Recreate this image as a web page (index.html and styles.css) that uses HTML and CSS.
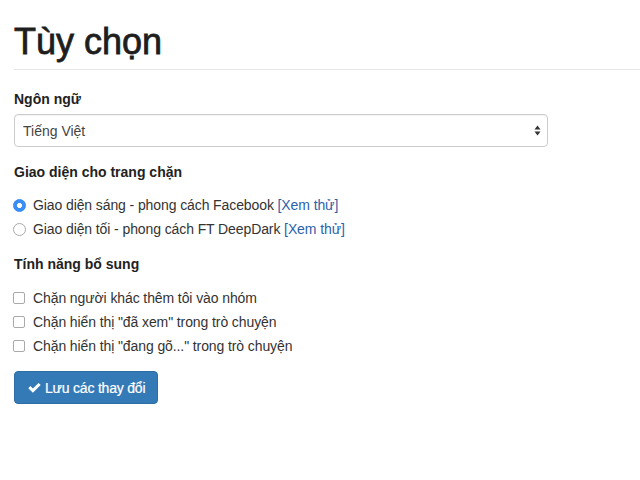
FILE: index.html
```html
<!DOCTYPE html>
<html lang="vi">
<head>
<meta charset="utf-8">
<title>Tùy chọn</title>
<link rel="stylesheet" href="styles.css">
</head>
<body>
<div class="page">
  <h1 class="title">Tùy chọn</h1>

  <div class="section section-lang">
    <label class="section-label" for="lang">Ngôn ngữ</label>
    <div class="select-wrap">
      <select id="lang" class="select">
        <option>Tiếng Việt</option>
      </select>
      <svg class="select-arrows" width="7" height="11" viewBox="0 0 7 11" aria-hidden="true">
        <path d="M3.5 0.5 L6.5 4.5 L0.5 4.5 Z" fill="#333"/>
        <path d="M3.5 10.5 L6.5 6.5 L0.5 6.5 Z" fill="#333"/>
      </svg>
    </div>
  </div>

  <div class="section">
    <div class="section-label">Giao diện cho trang chặn</div>
    <div class="options">
      <label class="option"><input type="radio" name="theme" class="radio" checked> <span>Giao diện sáng - phong cách Facebook <a href="#" class="link">[Xem thử]</a></span></label>
      <label class="option"><input type="radio" name="theme" class="radio"> <span>Giao diện tối - phong cách FT DeepDark <a href="#" class="link">[Xem thử]</a></span></label>
    </div>
  </div>

  <div class="section">
    <div class="section-label">Tính năng bổ sung</div>
    <div class="options options-check">
      <label class="option"><input type="checkbox" class="check"> <span>Chặn người khác thêm tôi vào nhóm</span></label>
      <label class="option"><input type="checkbox" class="check"> <span>Chặn hiển thị "đã xem" trong trò chuyện</span></label>
      <label class="option"><input type="checkbox" class="check"> <span>Chặn hiển thị "đang gõ..." trong trò chuyện</span></label>
    </div>
  </div>

  <button class="btn-save" type="button">
    <svg class="btn-icon" width="13" height="11" viewBox="0 0 13 11" aria-hidden="true">
      <path d="M0.3 6.2 L2.4 4.1 L4.9 6.6 L10.6 0.9 L12.7 3 L4.9 10.8 Z" fill="#fff"/>
    </svg>
    <span>Lưu các thay đổi</span>
  </button>
</div>
</body>
</html>
```

FILE: styles.css
```css
html, body {
  margin: 0;
  padding: 0;
  background: #fff;
}

body {
  font-family: "Liberation Sans", Arial, Helvetica, sans-serif;
  font-size: 14px;
  line-height: 20px;
  color: #333;
}

.page {
  display: flex;
  flex-direction: column;
  align-items: flex-start;
  padding-left: 14px;
}

.title {
  align-self: stretch;
  margin: 22px 0 0 0;
  padding-bottom: 7px;
  font-size: 36px;
  line-height: 40px;
  font-weight: normal;
  -webkit-text-stroke: 0.8px #1e1e1e;
  color: #1e1e1e;
  border-bottom: 1px solid #e8e8e8;
}

.section {
  display: flex;
  flex-direction: column;
  align-items: flex-start;
  margin-top: 15px;
}

.section-lang {
  margin-top: 19px;
}

.section-label {
  display: block;
  font-weight: bold;
  color: #222;
}

.select-wrap {
  position: relative;
  margin-top: 5px;
  width: 534px;
}

.select {
  -webkit-appearance: none;
  appearance: none;
  display: block;
  box-sizing: border-box;
  width: 534px;
  height: 33px;
  padding: 0 8px;
  font-family: inherit;
  font-size: 14px;
  color: #444;
  background: #fff;
  border: 1px solid #ccc;
  border-radius: 4px;
  box-shadow: inset 0 1px 1px rgba(0, 0, 0, 0.05);
}

.select-arrows {
  position: absolute;
  right: 7px;
  top: 11px;
}

.options {
  display: flex;
  flex-direction: column;
  gap: 4px;
  margin-top: 13px;
}

.options-check {
  margin-top: 14px;
}

.option {
  display: flex;
  align-items: center;
  gap: 7px;
  color: #333;
  letter-spacing: -0.1px;
}

.radio {
  -webkit-appearance: none;
  appearance: none;
  box-sizing: border-box;
  width: 13px;
  height: 13px;
  margin: 0 0 0 -1px;
  border: 1px solid #aaa;
  border-radius: 50%;
  background: #fff;
}

.radio:checked {
  border-color: #2f86f0;
  background: radial-gradient(circle, #fff 0, #fff 2.2px, #3b8ef5 2.7px);
}

.check {
  -webkit-appearance: none;
  appearance: none;
  box-sizing: border-box;
  width: 12px;
  height: 12px;
  margin: 0 1px 0 -1px;
  border: 1px solid #aaa;
  border-radius: 2px;
  background: #fff;
}

.link {
  color: #2a62ad;
  text-decoration: none;
}

.btn-save {
  display: flex;
  align-items: center;
  gap: 4px;
  box-sizing: border-box;
  margin-top: 15px;
  height: 33px;
  padding: 0 12px 0 13px;
  font-family: inherit;
  font-size: 14px;
  letter-spacing: -0.2px;
  white-space: nowrap;
  color: #fff;
  -webkit-text-stroke: 0.2px #fff;
  background: #337ab7;
  border: 1px solid #2e6da4;
  border-radius: 4px;
}

.btn-icon {
  flex: none;
}
```
